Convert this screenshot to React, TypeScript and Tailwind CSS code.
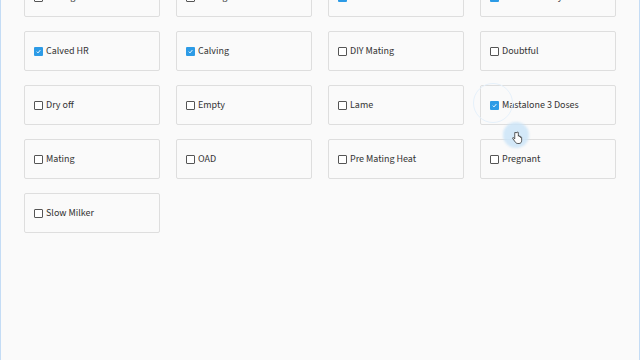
import React from "react";

const items: { label: string; checked: boolean }[] = [
  { label: "Bulling HR", checked: false },
  { label: "Bulling AI", checked: false },
  { label: "Calved LB", checked: true },
  { label: "Calved History", checked: true },
  { label: "Calved HR", checked: true },
  { label: "Calving", checked: true },
  { label: "DIY Mating", checked: false },
  { label: "Doubtful", checked: false },
  { label: "Dry off", checked: false },
  { label: "Empty", checked: false },
  { label: "Lame", checked: false },
  { label: "Mastalone 3 Doses", checked: true },
  { label: "Mating", checked: false },
  { label: "OAD", checked: false },
  { label: "Pre Mating Heat", checked: false },
  { label: "Pregnant", checked: false },
  { label: "Slow Milker", checked: false },
];

function Box({ checked }: { checked: boolean }) {
  if (checked) {
    return (
      <span className="flex h-[9px] w-[9px] shrink-0 items-center justify-center rounded-[1px] bg-[#2d9be6]">
        <svg viewBox="0 0 10 10" className="h-[7px] w-[7px]">
          <path d="M2.5 5.2 L4.3 7 L7.6 3" fill="none" stroke="white" strokeWidth="1.3" />
        </svg>
      </span>
    );
  }
  return <span className="h-[9px] w-[9px] shrink-0 rounded-[1px] border border-[#555] bg-white" />;
}

export default function App() {
  return (
    <div
      className="relative h-[360px] w-[640px] overflow-hidden border-x border-[#c4dcf5] bg-[#fafafa]"
      style={{ fontFamily: "'Source Sans 3', 'Source Sans Pro', 'Open Sans', sans-serif" }}
    >
      <div className="mt-[-23px] grid grid-cols-[136px_136px_136px_136px] gap-x-[16px] gap-y-[14px] pl-[23px]">
        {items.map((it) => (
          <label
            key={it.label}
            className="flex h-[40px] items-center gap-[3px] rounded-[2px] border border-[#dedede] bg-[#fafafa] pl-[9px] text-[10px] text-[#333]"
          >
            <Box checked={it.checked} />
            <span>{it.label}</span>
          </label>
        ))}
      </div>
      <div className="pointer-events-none absolute left-[472px] top-[83px] h-[40px] w-[40px] rounded-full border-[1.5px] border-[#e6f1fb]" />
      <div className="pointer-events-none absolute left-[502px] top-[122px] h-[26px] w-[26px] rounded-full bg-[#c9e4f8]/80 blur-[1px]" />
      <svg className="pointer-events-none absolute left-[511px] top-[131px]" width="11" height="14" viewBox="0 0 12 15">
        <path
          d="M3 1.5 v7 l-1.2 -1.2 c-0.6 -0.6 -1.6 0 -1 0.8 l2.6 3.6 c0.6 0.9 1.5 1.8 3 1.8 h1.3 c1.8 0 2.8 -1.3 2.8 -3 v-3.5 c0 -0.8 -1.2 -0.8 -1.2 0 v-1 c0 -0.8 -1.2 -0.8 -1.2 0 v-0.5 c0 -0.8 -1.2 -0.8 -1.2 0 v-3.8 c0 -1 -1.3 -1 -1.3 0 z"
          fill="white"
          stroke="#222"
          strokeWidth="0.8"
        />
      </svg>
    </div>
  );
}
